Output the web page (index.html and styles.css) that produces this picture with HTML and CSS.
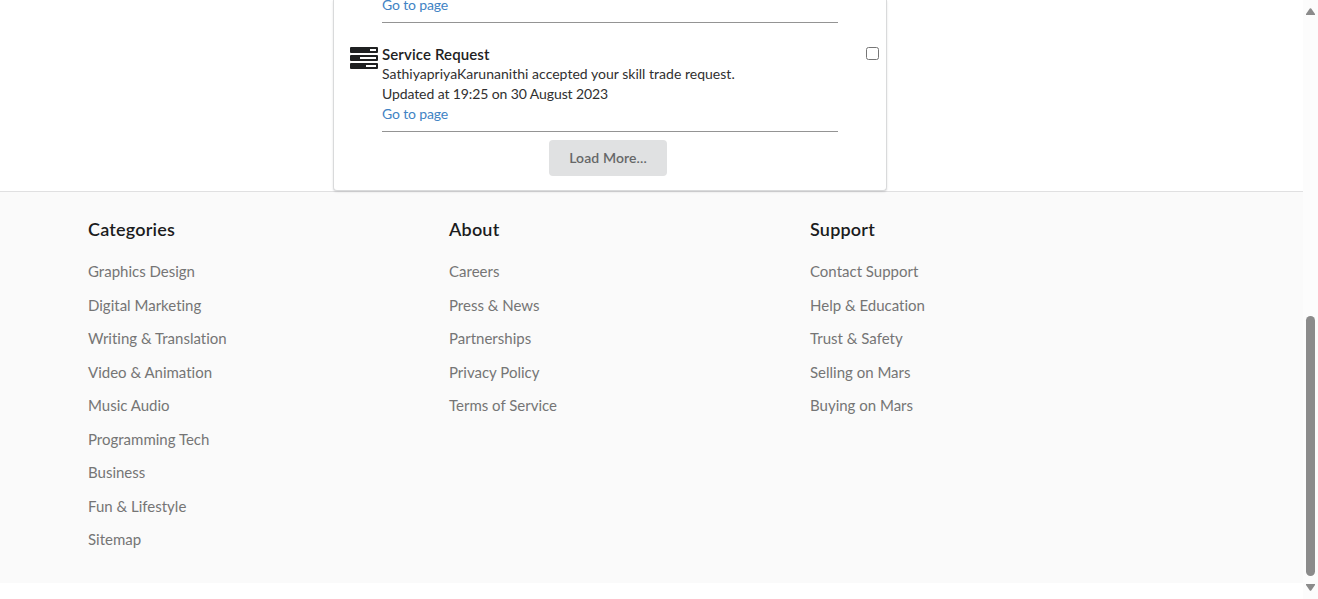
FILE: index.html
```html
<!DOCTYPE html>
<html lang="en">
<head>
<meta charset="utf-8">
<title>Notifications</title>
<link rel="stylesheet" href="styles.css">
</head>
<body>
<div class="viewport">
  <div class="page">
    <main class="card">
      <div class="item item-first">
        <div class="body"><a class="go">Go to page</a></div>
      </div>
      <div class="item">
        <svg class="icon" width="28" height="22" viewBox="0 0 28 22">
          <g fill="#1f2021"><rect width="28" height="6" rx="1"/><rect y="8" width="28" height="6" rx="1"/><rect y="16" width="28" height="6" rx="1"/></g>
          <g fill="#fff"><rect x="20" y="2" width="6" height="2"/><rect x="10" y="10" width="16" height="2"/><rect x="16" y="18" width="10" height="2"/></g>
        </svg>
        <div class="body">
          <div class="title">Service Request</div>
          <div class="text message">SathiyapriyaKarunanithi accepted your skill trade request.</div>
          <div class="text date">Updated at 19:25 on 30 August 2023</div>
          <a class="go">Go to page</a>
        </div>
        <input class="check" type="checkbox">
      </div>
      <button class="more">Load More...</button>
    </main>
    <footer class="footer">
      <section class="col">
        <h3>Categories</h3>
        <a>Graphics Design</a><a>Digital Marketing</a><a>Writing &amp; Translation</a><a>Video &amp; Animation</a><a>Music Audio</a><a>Programming Tech</a><a>Business</a><a>Fun &amp; Lifestyle</a><a>Sitemap</a>
      </section>
      <section class="col">
        <h3>About</h3>
        <a>Careers</a><a>Press &amp; News</a><a>Partnerships</a><a>Privacy Policy</a><a>Terms of Service</a>
      </section>
      <section class="col">
        <h3>Support</h3>
        <a>Contact Support</a><a>Help &amp; Education</a><a>Trust &amp; Safety</a><a>Selling on Mars</a><a>Buying on Mars</a>
      </section>
    </footer>
  </div>
  <div class="scrollbar">
    <svg width="9" height="7" viewBox="0 0 9 7"><path d="M3.8.5Q4.500 0 5.200.5L9 6v1H0V6z" fill="#8b8b8b"/></svg>
    <div class="thumb"></div>
    <svg width="9" height="7" viewBox="0 0 9 7"><path d="M0 0h9v1L5.200 6.500Q4.500 7 3.800 6.500L0 1z" fill="#8b8b8b"/></svg>
  </div>
</div>
</body>
</html>
```
FILE: styles.css
```css
* { box-sizing: border-box; }
body { margin: 0; background: #fff; font-family: Lato, "Liberation Sans", sans-serif; font-size: 14px; line-height: 20px; color: #212121; font-variant-ligatures: none; }
.viewport { display: flex; height: 599px; overflow: hidden; }
.page { width: 1303px; height: 599px; overflow: hidden; }
.card { display: flex; flex-direction: column; width: 554px; height: 191px; margin-left: 333px; border: 1px solid #d9dadb; border-top: 0; border-radius: 0 0 4px 4px; box-shadow: 0 1px 2px rgba(34, 36, 38, .15); position: relative; background: #fff; }
.item { display: flex; height: 109px; padding: 21px 6px 0 16px; }
.item-first { height: 23px; padding: 0 6px 0 48px; }
.item-first .body { display: flex; align-items: flex-end; padding-bottom: 7px; }
.body { width: 456px; border-bottom: 1px solid #949494; }
.icon { flex: none; margin: 3px 4px 0 0; }
.title { font-size: 15px; font-weight: 600; line-height: 20px; letter-spacing: .12px; }
.text { font-size: 14px; color: #303030; }
.message { letter-spacing: .02px; }
.date { letter-spacing: -.1px; }
.go { display: block; color: #4183c4; letter-spacing: -.15px; }
.check { width: 13px; height: 13px; margin: 3px 0 0 28px; }
.more { width: 118px; height: 36px; margin: 8px 0 0 215px; border: 0; border-radius: 4px; background: #e0e1e2; color: #666768; font: 600 14px/14px Lato, "Liberation Sans", sans-serif; letter-spacing: .1px; }
.footer { display: flex; height: 392px; padding: 26px 0 0 88px; border-top: 1px solid #e0e0e1; background: #fafafa; }
.col { width: 361px; }
.col h3 { margin: 0 0 21px; font-size: 18px; font-weight: 600; line-height: 22px; letter-spacing: .2px; color: #1b1c1d; }
.col a { display: block; height: 33.5px; font-size: 15px; line-height: 21px; color: #757575; }
.scrollbar { display: flex; flex-direction: column; width: 15px; padding: 8px 0 0 3px; background: #fcfcfc; }
.thumb { width: 9px; height: 260px; margin: 301px 0 8px; border-radius: 5px; background: #8b8b8b; }
```
